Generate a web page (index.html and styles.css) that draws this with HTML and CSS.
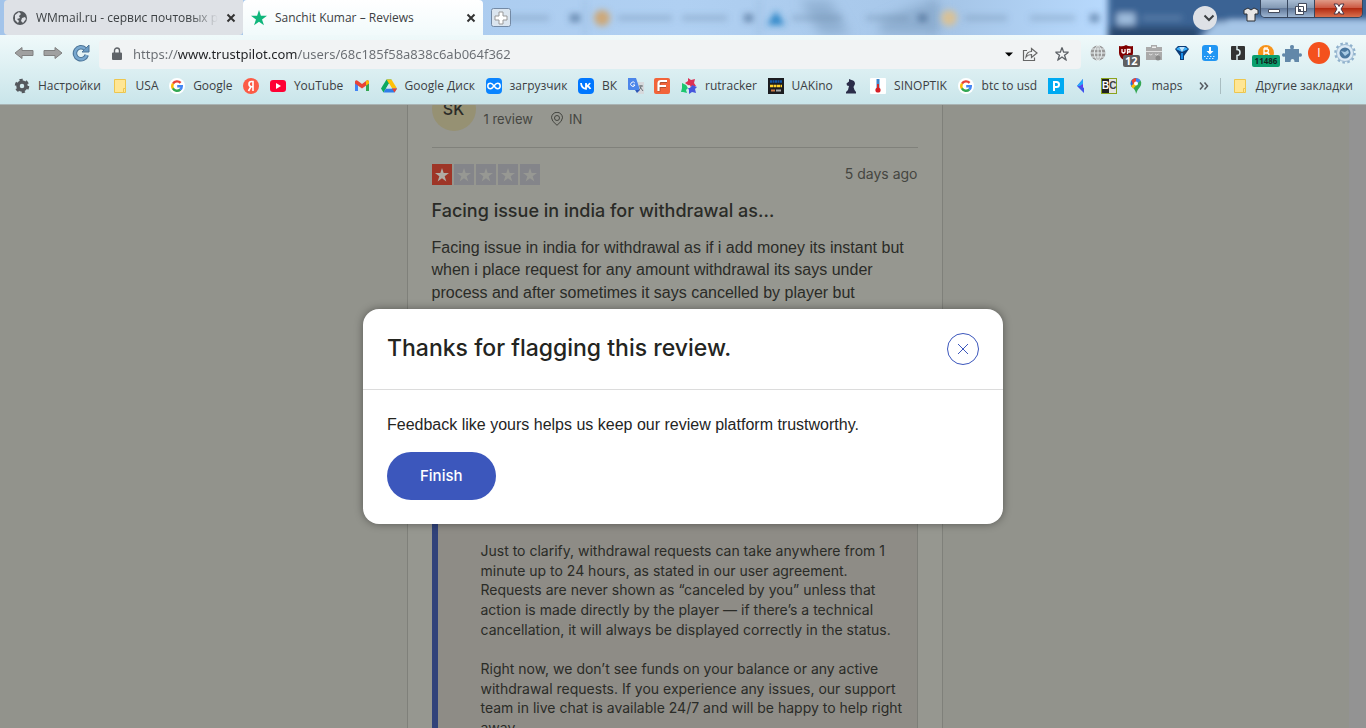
FILE: index.html
```
<!DOCTYPE html>
<html lang="en">
<head>
<meta charset="utf-8">
<title>Sanchit Kumar – Reviews</title>
<link rel="stylesheet" href="styles.css">
</head>
<body>
<svg class="defs" aria-hidden="true">
  <symbol id="g" viewBox="0 0 16 16"><circle cx="8" cy="8" r="8" fill="#fff"/><g fill="none" stroke-width="2.4"><path d="M11.6 4.9A4.8 4.8 0 0 0 4 5.6" stroke="#ea4335"/><path d="M4 5.5a4.8 4.8 0 0 0 0 5" stroke="#fbbc05"/><path d="M3.9 10.4a4.8 4.8 0 0 0 7.4 1.1" stroke="#34a853"/><path d="M11.2 11.6A4.6 4.6 0 0 0 12.8 8.2H8.2" stroke="#4285f4"/></g></symbol>
  <symbol id="folder" viewBox="0 0 16 16"><path d="M2.5 1.500h11v9.500l-2 3.500h-9z" fill="#ffe694" stroke="#edc64f"/><path d="M11.500 10.500h2v4h-2z" fill="#ffe694" stroke="#edc64f"/></symbol>
  <symbol id="x" viewBox="0 0 10 10"><path d="M1.500 1.500l7 7M8.500 1.500l-7 7" fill="none" stroke="#333" stroke-width="2"/></symbol>
  <symbol id="star" viewBox="0 0 20 20"><path d="M10 0l2.400 7.300H20l-6.200 4.500 2.400 7.400L10 14.600l-6.200 4.600 2.400-7.400L0 7.300h7.600z"/></symbol>
</svg>

<div class="browser">
  <header class="chrome">
    <div class="strip">
      <svg class="glass" viewBox="0 0 1366 35" preserveAspectRatio="none" aria-hidden="true">
        <defs>
          <filter id="b3" x="-30%" y="-60%" width="160%" height="220%"><feGaussianBlur stdDeviation="3"/></filter>
          <filter id="b6" x="-30%" y="-60%" width="160%" height="220%"><feGaussianBlur stdDeviation="6"/></filter>
          <linearGradient id="sky" x1="0" y1="0" x2="1" y2="0"><stop offset="0" stop-color="#a3c4ea"/><stop offset=".5" stop-color="#b0d0f2"/><stop offset=".7" stop-color="#a6c6e8"/><stop offset=".82" stop-color="#b9dbff"/></linearGradient>
        </defs>
        <rect width="1366" height="35" fill="url(#sky)"/>
        <g filter="url(#b6)"><path d="M800 0h30l20 35h-30zM880 20l50-20h10v35h-60z" fill="#7f9fc2" opacity=".6"/></g>
        <g filter="url(#b3)">
          <path d="M1108-10h270v30h-150l-30 27h-90z" fill="#3a6494"/>
          <path d="M1108 27h90v14h-90z" fill="#2b4a70"/>
          <path d="M1215 22h165v24h-185z" fill="#a5c5e6"/>
          <rect x="1117" y="13" width="18" height="12" fill="#9dbbdc"/>
          <path d="M1142 18h40" stroke="#6688b0" stroke-width="3"/>
          <path d="M505 18h44M618 18h54M682 18h45M792 18h50M866 18h42M965 18h42M1030 18h45" stroke="#6c87a8" stroke-width="5" opacity=".4"/>
          <path d="M570 18h10M744 18h9M918 18h9M1090 18h9" stroke="#47678f" stroke-width="8" opacity=".65"/>
          <path d="M585 0v35M759 0v35M933 0v35" stroke="#6d91bd" opacity=".6"/>
        </g>
        <g filter="url(#b3)"><circle cx="602" cy="18" r="8" fill="#cda777"/><path d="M767 25l9-14 9 14z" fill="#2f87c8"/><circle cx="949" cy="18" r="8" fill="#d9c195"/></g>
      </svg>
      <button class="tab tab-idle">
        <svg width="16" height="16" viewBox="0 0 16 16"><circle cx="8" cy="8" r="7" fill="#55595e"/><path d="M3 5l4-3 2 2-2 2 1 2-3 1 2 2-1 2-3-3zM10 8l3-1 1 2-3 4-2-2z" fill="#dee1e6"/></svg>
        <span class="tab-text fade">WMmail.ru - сервис почтовых рас</span>
        <svg width="10" height="10"><use href="#x"/></svg>
      </button>
      <button class="tab tab-active">
        <svg width="16" height="16" fill="#0fb67b"><use href="#star"/></svg>
        <span class="tab-text">Sanchit Kumar – Reviews</span>
        <svg width="10" height="10"><use href="#x"/></svg>
      </button>
      <button class="newtab" aria-label="New tab"><svg width="20" height="20" viewBox="0 0 20 20"><rect x=".5" y=".5" width="19" height="18" rx="2" fill="#dbe5ef" stroke="#7389a4"/><path d="M8 4h4v4h4v4h-4v4H8v-4H4V8h4z" fill="#fff" stroke="#999"/></svg></button>
      <div class="winctl">
        <button class="tabsearch" aria-label="Search tabs"><svg width="12" height="8" viewBox="0 0 12 8"><path d="M1.500 1.500L6 6l4.500-4.500" fill="none" stroke="#3c4043" stroke-width="2"/></svg></button>
        <svg class="shirt" width="16" height="15" viewBox="0 0 16 15"><path d="M5 1L1 3v4h3v7h8V7h3V3l-4-2-3 2z" fill="#e6e6e6" stroke="#2d3036"/></svg>
        <div class="winbtns">
          <button class="wb" aria-label="Minimize"><svg width="14" height="14" viewBox="0 0 14 14"><path d="M1.500 7.500h11v3h-11z" fill="#fff" stroke="#444b5c"/></svg></button>
          <button class="wb" aria-label="Restore"><svg width="14" height="14" viewBox="0 0 14 14"><path d="M4.500 1.500h8v8h-8zM1.500 4.500h8v8h-8z" fill="#fff" stroke="#444b5c"/><path d="M4.500 7.500h2v2h-2z" fill="#667" stroke="#444b5c"/></svg></button>
          <button class="wb close" aria-label="Close"><svg width="14" height="14" viewBox="0 0 14 14"><path d="M2 2h3.500L7 4.500 8.500 2H12L9 7l3 5H8.500L7 9.500 5.500 12H2l3-5z" fill="#fff" stroke="#4a3444"/></svg></button>
        </div>
      </div>
    </div>

    <div class="toolbar">
      <button class="tb" aria-label="Back"><svg width="20" height="14" viewBox="0 0 20 14"><path d="M1 7l7-5.500v3h11v5H8v3z" fill="#a0a0a0" stroke="#808080"/></svg></button>
      <button class="tb" aria-label="Forward"><svg width="20" height="14" viewBox="0 0 20 14"><path d="M19 7l-7-5.500v3H1v5h11v3z" fill="#a0a0a0" stroke="#808080"/></svg></button>
      <button class="tb" aria-label="Reload"><svg width="18" height="18" viewBox="0 0 18 18"><path d="M13 4.800A6 6 0 1 0 14.700 11" fill="none" stroke="#4c7598" stroke-width="4.500"/><path d="M17 1v7h-7z" fill="#6a9bc3" stroke="#4c7598"/><path d="M13 4.800A6 6 0 1 0 14.700 11" fill="none" stroke="#78a8cf" stroke-width="2.500"/></svg></button>
      <div class="omni">
        <svg width="10" height="14" viewBox="0 0 10 14"><path d="M1 5.500h8a1 1 0 0 1 1 1V12a1 1 0 0 1-1 1H1a1 1 0 0 1-1-1V6.500a1 1 0 0 1 1-1z" fill="#5f6368"/><path d="M2.500 6V3.500a2.500 2.500 0 0 1 5 0V6" fill="none" stroke="#5f6368" stroke-width="1.400"/></svg>
        <input class="url" type="text" aria-label="Address" value="https://www.trustpilot.com/users/68c185f58a838c6ab064f362">
        <svg width="8" height="5" viewBox="0 0 8 5"><path d="M0 .5h8L4 4.500z"/></svg>
        <svg class="share" width="16" height="16" viewBox="0 0 16 16"><path d="M5 4.500H1.500V14.500h11V11.500M4 11c.5-4 3-5.500 5.500-5.500v-3L15 7l-5.500 4.500v-3C7 8.500 5.500 9 4 11z" fill="none" stroke="#666" stroke-width="1.200"/></svg>
        <svg width="16" height="16" viewBox="-2 -2 24 24" fill="none" stroke="#5f6368" stroke-width="2"><use href="#star" width="20" height="20"/></svg>
      </div>
      <div class="exts">
        <svg width="16" height="16" viewBox="0 0 16 16"><circle cx="8" cy="8" r="7.500" fill="#999"/><path d="M8 0v16M0 8h16M1.500 4h13M1.500 12h13M8 0C3 5 3 11 8 16M8 0c5 5 5 11 0 16" fill="none" stroke="#e8eff0"/></svg>
        <span class="ext"><svg width="16" height="16" viewBox="0 0 16 16"><path d="M1 1q4 1 7-1 3 2 7 1v7q0 5-7 8-7-3-7-8z" fill="#800000"/><path d="M4 4v3q1.500 2 3 0V4M9.500 9V4.500H12V7H9.500" fill="none" stroke="#fff" stroke-width="1.300"/></svg><b class="badge">12</b></span>
        <svg width="16" height="16" viewBox="0 0 16 16"><path d="M0 2h5V0h6v2h5v13H0z" fill="#aaa"/><path d="M6 1.500h4v1.500H6z" fill="#eee"/><path d="M0 6.500h16M3 9q2 2 3.500 0M9 9q1.500 2 3.500 0" stroke="#e0e0e0" fill="none"/><circle cx="12" cy="13" r="2.500" fill="#888"/></svg>
        <svg width="16" height="16" viewBox="0 0 16 16"><path d="M1 4l3-3h8l3 3-5 7v4H6v-4z" fill="#0c3d78"/><path d="M2 4l3-2 3 5zM14 4l-3-2-3 5z" fill="#38b3ff"/><path d="M5 2h6L8 7z" fill="#bfe6ff"/><path d="M7 8h2v6H7z" fill="#168be8"/></svg>
        <svg width="16" height="16" viewBox="0 0 16 16"><rect width="16" height="16" rx="3" fill="#2196f3"/><path d="M7 2h2v4h2.500L8 9.500 4.500 6H7z" fill="#fff"/><path d="M2 11.500h12M4 13.500h9" stroke="#d5ecff" stroke-dasharray="1.500 1.500"/></svg>
        <svg width="16" height="16" viewBox="0 0 16 16"><rect x="1" y="1" width="14" height="14" rx="1" fill="#333"/><path d="M7 0v4.500q3 0 3 3t-3 3V16" stroke="#dfeff1" stroke-width="1.500" fill="none"/></svg>
        <span class="ext ext-coin"><svg width="16" height="16" viewBox="0 0 16 16"><circle cx="8" cy="8" r="8" fill="#f7931a"/><path d="M6 12V4h2.500q2 0 2 1.800T8.500 8H6h3q2 0 2 2t-2 2zM7 2v2M9 2v2" fill="none" stroke="#fff" stroke-width="1.300"/></svg><b class="badge badge-green">11486</b></span>
        <svg class="puzzle" width="20" height="20" viewBox="0 0 20 20"><path d="M3 6h5.500Q7 2 10 2t1.500 4H17v4.500q3-1 3 1.500t-3 1.500V19h-4.500q0-3-2-3t-2 3H3v-5.500q-3 1-3-1.500t3-1.500z" fill="#6288a9"/></svg>
        <button class="profile">I</button>
        <svg class="gear" width="22" height="22" viewBox="0 0 22 22"><circle cx="11" cy="11" r="9.500" fill="none" stroke="#8fb0cc" stroke-width="2.500" stroke-dasharray="2.500 2.480"/><circle cx="11" cy="11" r="8.500" fill="#dceaf5" stroke="#9dbad2"/><circle cx="11" cy="11" r="5.500" fill="#4b789f"/><path d="M7 9l4 1 3-2 1 3-4 3z" fill="#a9cbe4"/></svg>
      </div>
    </div>

    <nav class="bookmarks">
      <a href="#"><svg width="16" height="16" viewBox="0 0 16 16"><circle cx="8" cy="8" r="4" fill="none" stroke="#55595e" stroke-width="3.500"/><circle cx="8" cy="8" r="6" fill="none" stroke="#55595e" stroke-width="2.500" stroke-dasharray="3.140 3.140"/></svg>Настройки</a>
      <a href="#"><svg width="16" height="16"><use href="#folder"/></svg>USA</a>
      <a href="#"><svg width="16" height="16"><use href="#g"/></svg>Google</a>
      <a href="#" aria-label="Yandex"><svg width="16" height="16" viewBox="0 0 16 16"><circle cx="8" cy="8" r="8" fill="#fc5b45"/><path d="M10 13V3.500H8.500q-2.500 0-2.500 2.500t2.500 2.700H10M8 8.500L5.500 13" fill="none" stroke="#fff" stroke-width="1.600"/></svg></a>
      <a href="#"><svg width="16" height="16" viewBox="0 0 16 16"><rect y="2" width="16" height="12" rx="3" fill="#f03"/><path d="M6 5l5 3-5 3z" fill="#fff"/></svg>YouTube</a>
      <a href="#" aria-label="Gmail"><svg width="16" height="16" viewBox="0 0 16 16"><path d="M1 4v9h3V7z" fill="#4285f4"/><path d="M15 4v9h-3V7z" fill="#34a853"/><path d="M1 3.500q1-2 3-.5l4 3 4-3q2-1.500 3 .5v2L8 10.500 1 5.500z" fill="#ea4335"/><path d="M12 3q2-1.500 3 .5v2l-3 2z" fill="#fbbc05"/></svg></a>
      <a href="#"><svg width="16" height="16" viewBox="0 0 16 16"><path d="M5.500 1.500h5L5 10.500l-2.500 4L0 10.500z" fill="#0da960"/><path d="M5.500 1.500h5L16 10.500h-5z" fill="#ffc107"/><path d="M5 10.500h11l-2.500 4h-11z" fill="#2f7de9"/><path d="M11 10.500h5l-2.500 4z" fill="#ea4335"/><path d="M8 5.600l3 4.900H5z" fill="#d4eaee"/></svg>Google Диск</a>
      <a href="#"><svg width="16" height="16" viewBox="0 0 16 16"><rect width="16" height="16" rx="4" fill="#0a84ff"/><path d="M8 8Q6 5.300 4.500 5.300a2.700 2.700 0 0 0 0 5.400Q6 10.700 8 8t3.500-2.700a2.700 2.700 0 0 1 0 5.400Q10 10.700 8 8z" fill="none" stroke="#fff" stroke-width="1.500"/></svg>загрузчик</a>
      <a href="#"><svg width="16" height="16" viewBox="0 0 16 16"><rect width="16" height="16" rx="4" fill="#07f"/><path d="M3 5q.5 5.500 5 5.800V5M8 8q3-.5 4-3M8.500 8q3 .5 4 3" fill="none" stroke="#fff" stroke-width="1.800"/></svg>ВК</a>
      <a href="#" aria-label="Translate"><svg width="16" height="16" viewBox="0 0 16 16"><path d="M7 4h9v12h-6z" fill="#d6d9dc"/><path d="M0 0h8l4 12H1q-1 0-1-1z" fill="#4c86ea"/><path d="M7 12h5l-3 3z" fill="#2d58b7"/><path d="M6.800 5A2.200 2.200 0 1 0 7 7H5" stroke="#fff" fill="none"/><path d="M11 8h4M13 7v1q0 3-2 4M12 9l3 4" stroke="#6b7277" fill="none"/></svg></a>
      <a href="#" aria-label="F"><svg width="16" height="16" viewBox="0 0 16 16"><rect width="16" height="16" rx="2" fill="#f2643a"/><path d="M5 13.500V6q0-2.500 3-2.500h5M5 8.500h7" fill="none" stroke="#b04f2e" stroke-width="3"/><path d="M4.500 13V5.500Q4.500 3 7 3h6M4.500 8H12" fill="none" stroke="#fff" stroke-width="2.200"/></svg></a>
      <a href="#"><svg width="16" height="16" viewBox="0 0 16 16"><path d="M7 0l3 2 4-1-1 4 2 3-4 0-3 2-1-3-3-2 3-2z" fill="#dc3154"/><path d="M1 5l4 2 2 3-2 2 1 3-4-1-2 0 1-4z" fill="#1cc66f"/><path d="M11 7l5 2-2 2 1 4-4-1-3 2v-4l-1-2 3-1z" fill="#4556dc"/><circle cx="8" cy="8.500" r="1.500" fill="#e4f3f5"/></svg>rutracker</a>
      <a href="#"><svg width="16" height="16" viewBox="0 0 16 16"><rect width="16" height="16" fill="#1b1c20"/><path d="M2 3.500h12" stroke="#15a" stroke-width="2.500" stroke-dasharray="2 .5"/><path d="M2 8h12" stroke="#ffd12a" stroke-width="2.500" stroke-dasharray="3 .5"/><path d="M3 12.500h4" stroke="#ca7a45" stroke-width="2"/><path d="M8 12.500h5" stroke="#aaa" stroke-width="2"/></svg>UAKino</a>
      <a href="#" aria-label="Chess"><svg width="16" height="16" viewBox="0 0 16 16"><path d="M3 15.500V14l2-2 1-4-2-.5-.5-2L6 3.500 6 1l2.500 1Q12 2.500 12 6l-1.500 3 1 3 1.500 2v1.500z" fill="#2b2d49"/></svg></a>
      <a href="#"><svg width="16" height="16" viewBox="0 0 16 16"><rect width="16" height="16" rx="1" fill="#fff"/><path d="M6.500 1h3v9h-3z" fill="#3c85cc"/><path d="M7 6h2v5H7z" fill="#d32a2a"/><circle cx="8" cy="12" r="2.600" fill="#d61f26"/></svg>SINOPTIK</a>
      <a href="#"><svg width="16" height="16"><use href="#g"/></svg>btc to usd</a>
      <a href="#" aria-label="P"><svg width="16" height="16" viewBox="0 0 16 16"><rect width="16" height="16" fill="#00aaf2"/><path d="M6 13V4h2.500a2.500 2.500 0 0 1 0 5H6" fill="none" stroke="#fff" stroke-width="2"/></svg></a>
      <a href="#" aria-label="Arrow"><svg width="16" height="16" viewBox="0 0 16 16"><path d="M3 8l6-7v5L7 8l3 2v5z" fill="#4053ec"/><path d="M9 1v5L7 8H3z" fill="#27a8fa"/><path d="M6 8l3-2v4z" fill="#6538e9"/></svg></a>
      <a href="#"><span class="bc"><b>B</b><b>C</b></span></a>
      <a href="#"><svg width="16" height="16" viewBox="0 0 16 16"><path d="M3 8q5 4 5 8 1-4 4-7 3-5-1-8z" fill="#34a853"/><path d="M2.500 6A5.500 5.500 0 0 1 8 0v6L3.500 9z" fill="#1a73e8"/><path d="M3.500 2.500Q5 0 8 0l3 1-6 6z" fill="#ea4335"/><path d="M3 8l7-6q-1 6-5 8.500z" fill="#fbbc04"/><path d="M8 0q3 0 4.500 2.500L8 7z" fill="#4285f4"/><circle cx="8" cy="5.500" r="2" fill="#fff"/></svg>maps</a>
      <button class="more" aria-label="More bookmarks"><svg width="10" height="10" viewBox="0 0 10 10"><path d="M1 1.500L4 5 1 8.500M5.500 1.500l3 3.500-3 3.500" fill="none" stroke="#555a60" stroke-width="1.500"/></svg></button>
      <a class="other" href="#"><svg width="16" height="16"><use href="#folder"/></svg>Другие закладки</a>
    </nav>
  </header>

  <main class="page">
    <div class="scroller">
    <article class="review">
      <header class="who">
        <span class="avatar">SK</span>
        <span class="meta">1 review</span>
        <span class="meta place"><svg width="12" height="14" viewBox="0 0 12 14" fill="none" stroke="#43443f"><path d="M6 13.300Q.5 9 .5 5.800a5.500 5.500 0 0 1 11 0Q11.500 9 6 13.300z"/><circle cx="6" cy="6" r="2.500"/></svg>IN</span>
      </header>
      <div class="rating">
        <div class="stars" role="img" aria-label="Rated 1 out of 5">
          <span class="on"><svg width="14" height="14"><use href="#star"/></svg></span><span><svg width="14" height="14"><use href="#star"/></svg></span><span><svg width="14" height="14"><use href="#star"/></svg></span><span><svg width="14" height="14"><use href="#star"/></svg></span><span><svg width="14" height="14"><use href="#star"/></svg></span>
        </div>
        <time class="date">5 days ago</time>
      </div>
      <h2 class="headline">Facing issue in india for withdrawal as…</h2>
      <p class="text">Facing issue in india for withdrawal as if i add money its instant but<br>when i place request for any amount withdrawal its says under<br>process and after sometimes it says cancelled by player but</p>
      <section class="reply">
        <p>Just to clarify, withdrawal requests can take anywhere from 1<br>minute up to 24 hours, as stated in our user agreement.<br>Requests are never shown as “canceled by you” unless that<br>action is made directly by the player — if there’s a technical<br>cancellation, it will always be displayed correctly in the status.</p>
        <p>Right now, we don’t see funds on your balance or any active<br>withdrawal requests. If you experience any issues, our support<br>team in live chat is available 24/7 and will be happy to help right<br>away.</p>
      </section>
    </article>
    </div>
    <div class="track"></div>
    <div class="overlay">
      <div class="modal" role="dialog" aria-labelledby="mt">
        <div class="modal-head">
          <h1 id="mt">Thanks for flagging this review.</h1>
          <button class="dismiss" aria-label="Close dialog"><svg width="12" height="12" viewBox="0 0 12 12"><path d="M1 1l10 10M11 1L1 11" stroke="#3c57bc" fill="none"/></svg></button>
        </div>
        <div class="modal-body">
          <p>Feedback like yours helps us keep our review platform trustworthy.</p>
          <button class="finish">Finish</button>
        </div>
      </div>
    </div>
  </main>
</div>
</body>
</html>
```
FILE: styles.css
```
* { box-sizing: border-box; }
body { margin: 0; font-family: Inter, "Liberation Sans", sans-serif; }
h1, h2, p { margin: 0; }
button { border: 0; padding: 0; background: none; font: inherit; }
svg { flex: none; display: block; }
.defs { position: absolute; width: 0; height: 0; }

.browser { height: 100vh; display: flex; flex-direction: column; overflow: hidden; }

.chrome {
  flex: none;
  font: 12px/16px "Open Sans", "Noto Sans", sans-serif;
  color: #3c4043;
  background: linear-gradient(#fff 0, #eff9fa 36px, #c9e5ea 104px);
  border-bottom: 1px solid #a9b3b3;
}
.strip { position: relative; display: flex; height: 35px; }
.glass { position: absolute; inset: 0; width: 100%; height: 100%; }
.tab {
  position: relative;
  display: flex;
  align-items: center;
  gap: 8px;
  width: 240px;
  padding: 0 7px 0 8px;
  color: #3c4043;
  text-align: left;
}
.tab-idle { margin-left: 4px; width: 239px; background: #dee1e6; border-radius: 4px 0 4px 4px; }
.tab-active { background: linear-gradient(#fff, #f1fafb); border-radius: 4px 4px 0 0; }
.tab-text { flex: 1; min-width: 0; overflow: hidden; white-space: nowrap; }
.fade { -webkit-mask-image: linear-gradient(90deg, #000 85%, transparent); mask-image: linear-gradient(90deg, #000 85%, transparent); }
.newtab { position: relative; margin-left: 8px; }
.winctl { position: relative; display: flex; align-items: flex-start; margin-left: auto; padding-right: 3px; }
.tabsearch {
  display: flex;
  align-items: center;
  justify-content: center;
  width: 24px;
  height: 24px;
  margin: 6px 26px 0 0;
  padding-left: 8px;
  border-radius: 50%;
  background: #dee1e6;
}
.shirt { margin: 7px 1px 0 0; }
.winbtns { display: flex; border: 1px solid #37475f; border-top: 0; border-radius: 0 0 5px 5px; overflow: hidden; }
.wb { display: flex; align-items: center; justify-content: center; width: 27px; height: 17px; background: linear-gradient(#a9bdd4, #8096b1 50%, #62799a 50%, #9db5d2); border-right: 1px solid #37475f; }
.close { width: 47px; border: 0; background: linear-gradient(#e09a87, #cd5a44 45%, #b32b12 50%, #d8704e); }

.toolbar { display: flex; align-items: center; height: 35px; padding: 0 10px 0 14px; }
.tb { margin-right: 9px; }
.omni { flex: 1; display: flex; align-items: center; height: 29px; margin: 3px 9px 0 0; padding: 0 11px 0 13px; border-radius: 4px; background: #f1f3f4; }
.url {
  flex: 1;
  min-width: 0;
  margin-left: 11px;
  padding: 0;
  border: 0;
  outline: 0;
  font: 13px/20px "Noto Sans", "Open Sans", sans-serif;
  color: transparent;
  background: linear-gradient(90deg, #696d72 45px, #202124 45px 164px, #696d72 164px);
  -webkit-background-clip: text;
  background-clip: text;
}
.share { margin: 0 16px 0 9px; }
.exts { display: flex; align-items: center; gap: 12px; }
.ext { position: relative; }
.ext-coin { margin-right: -6px; }
.puzzle { margin-left: 2px; margin-right: -6px; }
.gear { margin-left: -8px; }
.badge { position: absolute; left: 5px; top: 10px; padding: 0 2px; border-radius: 2px; background: #5f6062; color: #fff; font: bold 11px/12px "Open Sans", sans-serif; }
.badge-green { left: -6px; width: 28px; background: #0a9f6e; color: #10251d; font-size: 8px; text-align: center; }
.profile { width: 22px; height: 22px; border-radius: 50%; background: #f4511e; color: #fff; font-size: 12px; }

.bookmarks { display: flex; align-items: center; justify-content: space-between; height: 34px; padding: 0 13px 2px 14px; }
.bookmarks a { display: flex; align-items: center; gap: 8px; color: #3c4043; text-decoration: none; white-space: nowrap; }
.bc { display: flex; width: 16px; height: 16px; border: 1px solid #8aa31d; background: #e2e2e2; font: 10px/14px "Liberation Sans", sans-serif; }
.bc b { flex: 1; text-align: center; }
.bc b:first-child { background: #222; color: #fff; }
.more { margin-left: 6px; }
.bookmarks .other { padding-left: 11px; border-left: 1px solid #a9bdc1; }

.page { position: relative; flex: 1; min-height: 0; display: flex; overflow: hidden; background: #92938c; color: #2a2b27; }
.scroller { flex: 1; min-width: 0; overflow: hidden; }
.track { width: 17px; background: #939393; }
.review { width: 536px; min-height: 100%; margin: 0 auto; padding: 0 24px; border: solid #7f807a; border-width: 0 1px; background: #969790; }
.who { display: flex; align-items: flex-end; height: 43px; margin-bottom: 16px; padding-bottom: 16px; border-bottom: 1px solid #80817b; }
.avatar { width: 44px; height: 44px; margin-right: 8px; border-radius: 50%; background: #969173; text-align: center; font-size: 16px; line-height: 44px; font-weight: 500; }
.meta { font-size: 13px; line-height: 24px; color: #454641; }
.place { display: flex; align-items: center; gap: 6px; margin-left: 18px; }
.rating { display: flex; align-items: center; justify-content: space-between; height: 21px; }
.stars { display: flex; gap: 2px; fill: #979893; }
.stars span { display: flex; align-items: center; justify-content: center; width: 20px; height: 21px; background: #84858a; }
.stars .on { background: #9e3527; fill: #b0aca5; }
.date { padding-bottom: 3px; font-size: 14px; color: #454641; }
.headline { margin-top: 14px; font-size: 18px; line-height: 24px; font-weight: 500; }
.text { margin-top: 14px; font: 16px/1.4 "Liberation Sans", sans-serif; white-space: nowrap; }
.reply { margin-top: 140px; padding: 96px 0 0 43px; border: 1px solid #7d7e78; border-left: 6px solid #31427a; background: #8e8c86; font-size: 14px; line-height: 1.4; white-space: nowrap; }
.reply p + p { margin-top: 20px; }

.overlay { position: absolute; inset: 0; display: flex; align-items: center; justify-content: center; }
.modal { width: 640px; border-radius: 16px; background: #fff; box-shadow: 0 0 8px rgba(0,0,0,.4); color: #24251f; }
.modal-head { display: flex; align-items: center; justify-content: space-between; height: 81px; padding: 0 24px; border-bottom: 1px solid #dcdcdc; }
.modal-head h1 { font-size: 23px; line-height: 32px; font-weight: 500; padding-bottom: 2px; }
.dismiss { display: flex; align-items: center; justify-content: center; width: 32px; height: 32px; border: 1px solid #3c57bc; border-radius: 50%; }
.modal-body { padding: 24px; font: 16px/22px "Liberation Sans", sans-serif; }
.finish { margin-top: 16px; padding: 0 33px; height: 48px; border-radius: 24px; background: #3c57bc; color: #fff; font-family: Inter, sans-serif; font-size: 15px; font-weight: 500; }
```
